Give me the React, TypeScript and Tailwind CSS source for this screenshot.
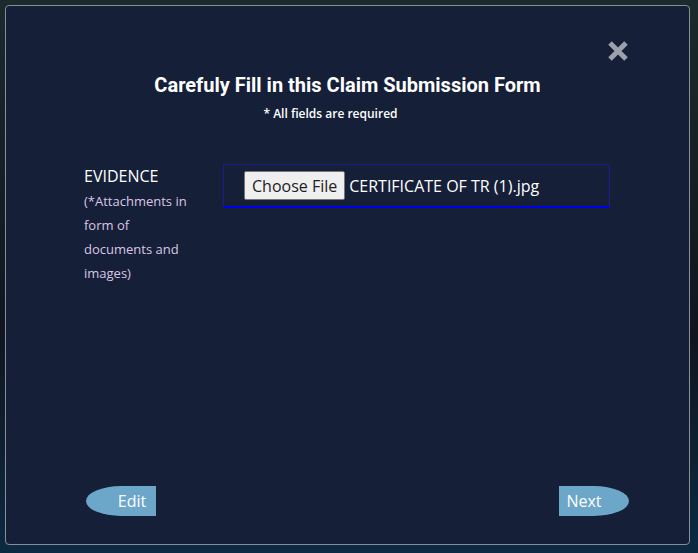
import React from "react";

const App = () => {
    return (
        <div
            className="w-[698px] h-[553px] overflow-hidden p-[5px] bg-[linear-gradient(180deg,#1b2a2c_0%,#10151f_60%,#0b2a42_100%)]"
            style={{ fontFamily: '"Open Sans", "Liberation Sans", sans-serif' }}
        >
            <div className="relative h-[540px] w-[685px] rounded-[4px] border border-[#8a8d94] bg-[#151f38] flex flex-col">
                {/* Close */}
                <div className="flex justify-end pt-[34px] pr-[60px]">
                    <button aria-label="close" className="w-[22px] h-[22px]">
                        <svg viewBox="0 0 22 22" width="22" height="22">
                            <path d="M3 3 L19 19 M19 3 L3 19" stroke="#9da1ad" strokeWidth="5" strokeLinecap="butt" />
                        </svg>
                    </button>
                </div>

                <h2
                    className="mt-[9px] text-center text-[20px] leading-[28px] font-bold text-white"
                    style={{ fontFamily: "Roboto, 'Liberation Sans', sans-serif" }}
                >
                    Carefuly Fill in this Claim Submission Form
                </h2>
                <p className="mt-[6px] pr-[34px] text-center text-[12px] leading-[18px] font-semibold text-white">
                    * All fields are required
                </p>

                <div className="mt-[42px] flex items-start">
                    <div className="ml-[78px] w-[125px]">
                        <div className="text-[16px] leading-[22px] text-white">EVIDENCE</div>
                        <div className="mt-[2px] text-[13px] leading-[24px] text-[#d9c6e3] w-[112px]">
                            (*Attachments in form of documents and images)
                        </div>
                    </div>
                    <div className="ml-[14px] -mt-[1px] w-[387px] h-[44px] border border-[#1c1c8c] border-b-2 border-b-[#0000ee] flex items-center pl-[20px]">
                        <span className="h-[29px] px-[7px] flex items-center rounded-[2px] border border-[#767676] bg-[#efefef] text-[16px] text-[#222]">
                            Choose File
                        </span>
                        <span className="ml-[4px] text-[16px] text-white">CERTIFICATE OF TR (1).jpg</span>
                    </div>
                </div>

                <div className="mt-auto mb-[28px] flex justify-between pl-[80px] pr-[60px]">
                    <button className="w-[70px] h-[30px] bg-[#6ca6c9] text-white text-[16px] rounded-l-[50%] pl-[22px]">
                        Edit
                    </button>
                    <button className="w-[70px] h-[30px] bg-[#6ca6c9] text-white text-[16px] rounded-r-[50%] pr-[20px]">
                        Next
                    </button>
                </div>
            </div>
        </div>
    );
};

export default App;
